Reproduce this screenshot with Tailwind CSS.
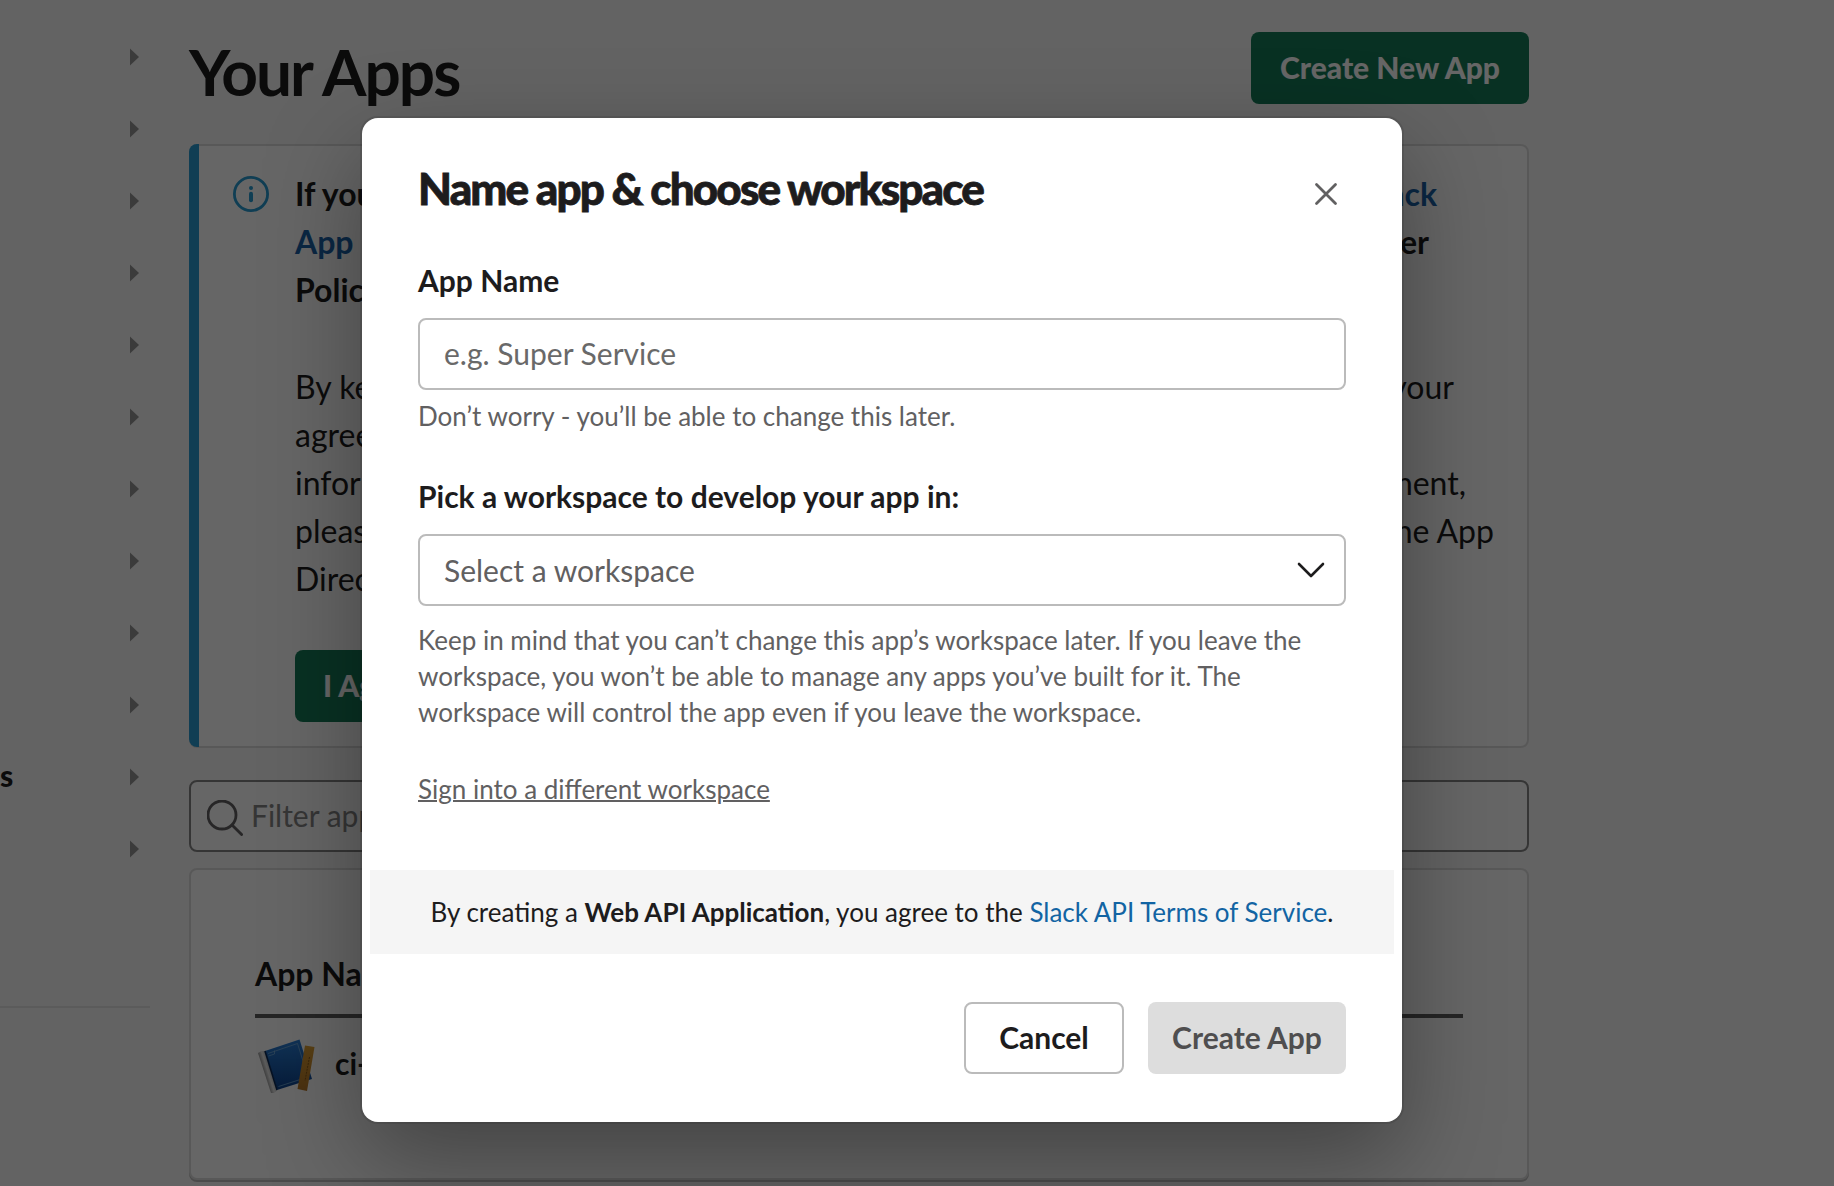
<!DOCTYPE html>
<html lang="en">
<head>
<meta charset="utf-8">
<title>Your Apps</title>
<script src="https://cdn.jsdelivr.net/npm/@tailwindcss/browser@4"></script>
</head>
<body class="font-['Lato',sans-serif] text-[#1d1c1d] bg-[#f8f8f8]">
<div class="relative w-[1834px] h-[1186px] overflow-hidden">

  <div class="flex w-full h-full">
    <!-- Sidebar -->
    <nav class="w-[150px] shrink-0 pt-[21px]">
      <ul id="nav" class="flex flex-col"></ul>
      <hr class="mt-[121px] border-t-2 border-[#e4e4e4]">
    </nav>

    <!-- Main column -->
    <main class="ml-[39px] w-[1340px] shrink-0 flex flex-col">
      <header class="flex justify-between items-start h-[144px] pt-8">
        <h1 class="text-[64px] leading-[80px] font-bold tracking-[-2px] whitespace-nowrap">Your Apps</h1>
        <button class="w-[278px] h-[72px] pb-0.5 rounded-lg bg-[#167c58] text-white text-[30px] font-black">Create New App</button>
      </header>

      <section class="relative h-[604px] shrink-0 rounded-lg bg-white border-2 border-[#dddddd] flex pl-[42px] pt-6 pr-2">
        <span class="absolute -left-0.5 -top-0.5 -bottom-px w-2.5 rounded-l-lg bg-[#289bd1]"></span>
        <svg class="w-9 h-9 mt-1.5 shrink-0" viewBox="0 0 36 36" fill="none" stroke="#289bd1">
          <circle cx="18" cy="18" r="16.6" stroke-width="2.8"/>
          <path d="M18 17.8v6.4" stroke-width="4" stroke-linecap="round"/>
          <circle cx="18" cy="12" r="2" fill="#289bd1" stroke="none"/>
        </svg>
        <div class="ml-[26px] text-[32px] leading-[48px] whitespace-nowrap">
          <div class="font-bold">
            <p class="flex justify-between w-[1142px]"><span>If you</span><a class="text-[#1b62a8]">Slack</a></p>
            <p class="flex justify-between w-[1134px]"><a class="text-[#1b62a8]">App</a><span>other</span></p>
            <p>Policy</p>
          </div>
          <p class="flex justify-between w-[1159px] mt-[49px]"><span>By keep</span><span>your</span></p>
          <p>agree</p>
          <p class="flex justify-between w-[1171px]"><span>inform</span><span>ment,</span></p>
          <p class="flex justify-between w-[1199px]"><span>please</span><span>the App</span></p>
          <p>Direct</p>
          <button class="mt-[47px] h-[72px] px-7 pb-0.5 rounded-lg bg-[#167c58] text-white text-[30px] font-black block">I Agree</button>
        </div>
      </section>

      <div class="mt-8 h-[72px] shrink-0 rounded-lg border-2 border-[#868686] bg-[#fefefe] flex items-center pl-4">
        <svg class="w-9 h-9 mt-[3px] shrink-0" viewBox="0 0 36 36" fill="none" stroke="#616061" stroke-width="2.8" stroke-linecap="round">
          <circle cx="15" cy="15" r="14"/>
          <path d="M25 25l9.6 9.6"/>
        </svg>
        <span class="ml-2 pb-0.5 text-[30px] text-[#868686] whitespace-nowrap">Filter apps</span>
      </div>

      <section class="mt-4 h-[312px] shrink-0 rounded-lg border-2 border-[#dddddd] bg-white px-16 pt-[80px] shadow-[0_2px_0_#bbbbbb]">
        <h2 class="text-[32px] leading-[48px] font-bold">App Name</h2>
        <div class="mt-4 h-1 bg-[#5e5d5e]"></div>
        <div class="mt-[17px] flex items-center">
          <svg class="w-16 h-16 ml-px" viewBox="0 0 64 64">
            <defs>
              <linearGradient id="paper" x1="0" y1="0" x2="0" y2="1"><stop offset="0" stop-color="#2b7fd6"/><stop offset="1" stop-color="#10458f"/></linearGradient>
              <linearGradient id="ruler" x1="0" y1="0" x2="0" y2="1"><stop offset="0" stop-color="#dc9f33"/><stop offset="1" stop-color="#b87828"/></linearGradient>
              <linearGradient id="roll" gradientUnits="userSpaceOnUse" x1="8" y1="38" x2="16" y2="35.5"><stop offset="0" stop-color="#989898"/><stop offset=".5" stop-color="#e8e8e8"/><stop offset="1" stop-color="#b5b5b5"/></linearGradient>
            </defs>
            <path d="M9 16L43.500 4.500L56 44L21 55Z" fill="url(#paper)"/>
            <path d="M12 18.500L41.500 8.500L52 42L22.500 51.500" fill="none" stroke="#7fb4dc" stroke-opacity=".7"/>
            <path d="M12.500 21l6-2v-3.500" fill="none" stroke="#7fb4dc" stroke-opacity=".7"/>
            <path d="M2 18l3.500-2L9 16L21.500 55l-3.500 3h-3Z" fill="url(#roll)"/>
            <path d="M9 16L21 55" stroke="#0c2c58" stroke-width="1.600"/>
            <path d="M49 10.500l9.500 1.500L51 56l-9.500-2Z" fill="url(#ruler)"/>
            <path d="M53.500 22l-4.500 24" stroke="#8a5a18" stroke-dasharray="2 1"/>
          </svg>
          <span class="ml-[15px] pb-2 text-[30px] leading-[44px] font-bold">ci-</span>
        </div>
      </section>
    </main>
  </div>

  <!-- Backdrop and dialog -->
  <div class="absolute inset-0 bg-black/60">
    <div class="ml-[362px] mt-[118px] w-[1040px] h-[1004px] rounded-2xl bg-white shadow-[0_0_0_2px_rgba(29,28,29,0.13),0_36px_96px_rgba(0,0,0,0.35)] pt-[43px]">
      <div class="px-14">
        <div class="flex justify-between">
          <h2 class="text-[44px] leading-[54px] font-black tracking-[-1.87px] whitespace-nowrap [-webkit-text-stroke:0.8px_#1d1c1d]">Name app &amp; choose workspace</h2>
          <svg class="w-6 h-6 mt-[21px] mr-2" viewBox="0 0 24 24" fill="none" stroke="#616061" stroke-width="2.800" stroke-linecap="round"><path d="M2.500 2.500l19 19M21.500 2.500l-19 19"/></svg>
        </div>
        <label class="block mt-[43px] text-[30px] leading-[44px] font-bold">App Name</label>
        <div class="mt-4 h-[72px] rounded-lg border-2 border-[#bbbbbb] px-6 pb-0.5 flex items-center text-[30px] text-[#696969]">e.g. Super Service</div>
        <p class="mt-2 text-[26px] leading-9 text-[#616061]">Don’t worry - you’ll be able to change this later.</p>
        <label class="block mt-10 text-[30px] leading-[44px] font-bold">Pick a workspace to develop your app in:</label>
        <div class="mt-4 h-[72px] rounded-lg border-2 border-[#bbbbbb] pl-6 pr-[19px] flex items-center justify-between text-[30px] text-[#616061]">
          <span>Select a workspace</span>
          <svg class="w-7 h-4" viewBox="0 0 28 16" fill="none" stroke="#1d1c1d" stroke-width="2.600" stroke-linecap="round" stroke-linejoin="round"><path d="M2 2l12 12L26 2"/></svg>
        </div>
        <p class="mt-4 text-[26px] leading-9 text-[#616061] whitespace-nowrap">Keep in mind that you can’t change this app’s workspace later. If you leave the<br>workspace, you won’t be able to manage any apps you’ve built for it. The<br>workspace will control the app even if you leave the workspace.</p>
        <p class="mt-[41px] text-[26px] leading-9 text-[#616061]"><a class="underline decoration-2">Sign into a different workspace</a></p>
      </div>
      <div class="mt-[63px] mx-2 h-[84px] bg-[#f5f5f5] flex items-center justify-center text-[26px]">
        <p>By creating a <b class="font-bold">Web API Application</b>, you agree to the <a class="text-[#1264a3]">Slack API Terms of Service</a>.</p>
      </div>
      <div class="mt-12 px-14 flex justify-end gap-6 text-[30px] font-bold">
        <button class="w-40 h-[72px] pb-0.5 rounded-lg border-2 border-[#bbbbbb]">Cancel</button>
        <button class="w-[198px] h-[72px] pb-0.5 rounded-lg bg-[#dddddd] text-[#4f4e4f]">Create App</button>
      </div>
    </div>
  </div>
</div>
<script>
  const labels = ['', '', '', '', '', '', '', '', '', '', 's', ''];
  document.getElementById('nav').innerHTML = labels.map(t =>
    `<li class="h-[72px] flex items-center justify-between pr-[11px]"><span class="pb-1 text-[30px] font-black leading-9">${t}</span><svg class="w-[9px] h-[18px]" viewBox="0 0 9 18"><path d="M0 0.500L9 9L0 17.500Z" fill="#959595"/></svg></li>`).join('');
</script>
</body>
</html>
